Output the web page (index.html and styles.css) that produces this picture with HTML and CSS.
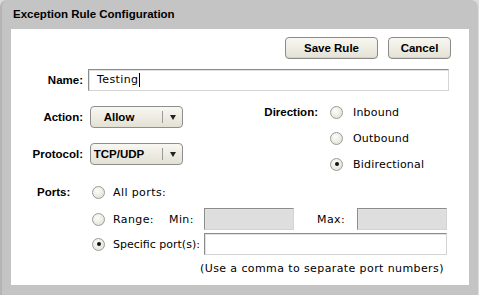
FILE: index.html
```html
<!DOCTYPE html>
<html>
<head>
<meta charset="utf-8">
<link rel="stylesheet" href="styles.css">
</head>
<body>
<div class="dialog">
  <div class="title">Exception Rule Configuration</div>
  <div class="panel">
    <div class="actions">
      <button class="btn btn-save">Save Rule</button>
      <button class="btn btn-cancel">Cancel</button>
    </div>
    <div class="name-row">
      <span class="lbl">Name:</span>
      <div class="field name-field">Testing<span class="caret"></span></div>
    </div>
    <div class="mid">
      <div class="left-col">
        <div class="sel-row">
          <span class="lbl">Action:</span>
          <div class="select"><span class="sel-text">Allow</span><span class="sel-div"></span><span class="sel-arrow"></span></div>
        </div>
        <div class="sel-row proto-row">
          <span class="lbl">Protocol:</span>
          <div class="select"><span class="sel-text">TCP/UDP</span><span class="sel-div"></span><span class="sel-arrow"></span></div>
        </div>
      </div>
      <div class="dir">
        <span class="lbl dir-lbl">Direction:</span>
        <div class="dir-opts">
          <div class="dir-row"><span class="radio"></span><span class="txt">Inbound</span></div>
          <div class="dir-row"><span class="radio"></span><span class="txt">Outbound</span></div>
          <div class="dir-row"><span class="radio checked"></span><span class="txt">Bidirectional</span></div>
        </div>
      </div>
    </div>
    <div class="ports">
      <span class="lbl ports-lbl">Ports:</span>
      <div class="port-opts">
        <div class="port-row all-row"><span class="radio"></span><span class="txt">All ports:</span></div>
        <div class="port-row range-row"><span class="radio"></span><span class="txt range-txt">Range:</span><span class="txt min-txt">Min:</span><div class="field dis min-field"></div><span class="txt max-txt">Max:</span><div class="field dis max-field"></div></div>
        <div class="port-row spec-row"><span class="radio checked"></span><span class="txt spec-txt">Specific port(s):</span><div class="field spec-field"></div></div>
        <div class="hint">(Use a comma to separate port numbers)</div>
      </div>
    </div>
  </div>
</div>
</body>
</html>
```
FILE: styles.css
```css
* { box-sizing: border-box; }
html, body { margin: 0; padding: 0; background: #dcdcdc; }
body { width: 479px; height: 295px; overflow: hidden; }
.dialog {
  width: 478px; height: 295px;
  background: #c4c4c4;
  border-radius: 7px 7px 0 0;
  border-left: 2px solid #b4b4b4;
  padding: 0 9px 10px 9px;
  display: flex; flex-direction: column;
  font-family: "DejaVu Sans", sans-serif; font-size: 11px; color: #000;
}
.title {
  height: 29px; flex: none;
  font-family: "Liberation Sans", Arial, sans-serif; font-weight: bold; font-size: 11.5px;
  padding: 8px 0 0 2px; line-height: 13px;
}
.panel { background: #fff; width: 458px; height: 256px; position: relative; }
.lbl { font-family: "Liberation Sans", Arial, sans-serif; font-weight: bold; font-size: 11.5px; }
.txt { letter-spacing: 0.4px; white-space: nowrap; }
.actions { display: flex; justify-content: flex-end; gap: 10px; padding: 8px 18px 0 0; height: 30px; }
.btn {
  height: 22px; border: 1px solid #8a8a8a; border-radius: 4px;
  background: linear-gradient(#f8f7f1, #e4e2d6);
  box-shadow: inset 0 -1px 0 #d6d4c6;
  font-family: "Liberation Sans", Arial, sans-serif; font-weight: bold; font-size: 11.5px;
  padding: 0; color: #000;
}
.btn-save { width: 93px; }
.btn-cancel { width: 63px; }
.name-row { display: flex; align-items: center; margin-top: 10px; height: 22px; }
.name-row .lbl { width: 72px; text-align: right; }
.field {
  height: 22px; border: 1px solid; border-color: #8c8c8c #d4d4d4 #d4d4d4 #8c8c8c;
  box-shadow: inset 1px 1px 0 #e2e2e2;
  background: #fff; flex: none;
}
.name-field { width: 361px; margin-left: 5px; padding: 0 0 0 8px; display: flex; align-items: center; line-height: 14px; letter-spacing: 0.4px; }
.caret { display: inline-block; width: 1px; height: 14px; background: #000; margin-left: 1px; }
.mid { display: flex; margin-top: 8px; height: 82px; }
.left-col { width: 246px; padding-top: 7px; }
.sel-row { display: flex; align-items: center; height: 22px; }
.proto-row { margin-top: 15px; }
.sel-row .lbl { width: 72px; text-align: right; }
.select {
  margin-left: 7px; width: 93px; height: 22px;
  border: 1px solid #8e8e8e; border-radius: 4px;
  background: linear-gradient(#f8f7f1, #e3e1d4);
  display: flex; align-items: center;
  font-family: "Liberation Sans", Arial, sans-serif; font-weight: bold; font-size: 11.5px;
}
.sel-text { width: 56px; text-align: center; }
.sel-div { width: 1px; height: 12px; background: #9a9a9a; margin-left: 15px; }
.sel-arrow {
  width: 0; height: 0; margin-left: 7px;
  border-left: 3.5px solid transparent; border-right: 3.5px solid transparent; border-top: 5px solid #222;
}
.dir { display: flex; }
.dir-lbl { width: 60px; text-align: right; margin-left: 1px; line-height: 26px; }
.dir-opts { margin-left: 12px; }
.dir-row { display: flex; align-items: center; height: 26px; }
.radio {
  width: 13px; height: 13px; border-radius: 50%; flex: none;
  border: 1px solid #9a9a96;
  background: radial-gradient(circle at 40% 35%, #fdfdf9, #dedcd0);
  display: inline-flex; align-items: center; justify-content: center;
}
.radio.checked::after { content: ""; width: 4px; height: 4px; border-radius: 50%; background: #111; }
.dir-row .radio { margin-right: 10px; }
.dir-row .txt { letter-spacing: 0.2px; }
.ports { display: flex; }
.ports-lbl { width: 61px; padding-left: 26px; line-height: 22px; }
.port-opts { margin-left: 20px; }
.port-row { display: flex; align-items: center; height: 22px; }
.port-row .radio { margin-right: 8px; }
.range-row { margin-top: 5px; }
.spec-row { margin-top: 3px; }
.range-txt { width: 56px; }
.min-txt { width: 35px; }
.field.dis { width: 90px; background: #dedede; }
.max-txt { margin-left: 23px; width: 40px; }
.spec-txt { width: 91px; letter-spacing: 0; }
.spec-field { width: 243px; }
.hint { padding-left: 108px; margin-top: 6px; line-height: 16px; letter-spacing: 0.4px; white-space: nowrap; }
```
